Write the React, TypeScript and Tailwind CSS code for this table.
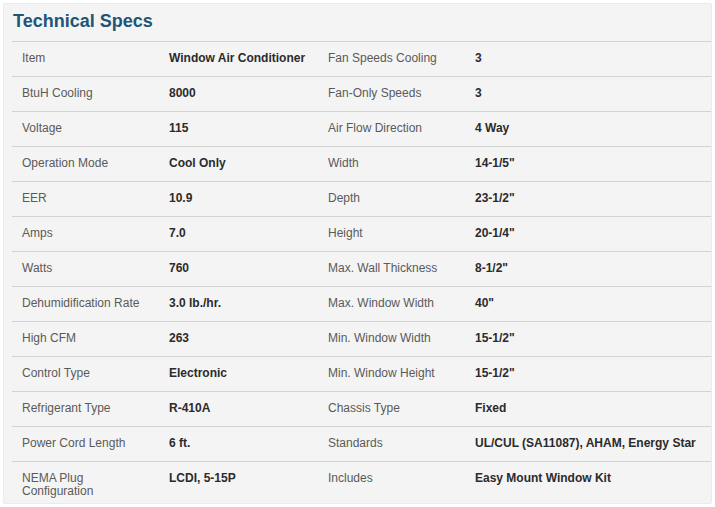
const specs: [string, string, string, string][] = [
    ['Item', 'Window Air Conditioner', 'Fan Speeds Cooling', '3'],
    ['BtuH Cooling', '8000', 'Fan-Only Speeds', '3'],
    ['Voltage', '115', 'Air Flow Direction', '4 Way'],
    ['Operation Mode', 'Cool Only', 'Width', '14-1/5"'],
    ['EER', '10.9', 'Depth', '23-1/2"'],
    ['Amps', '7.0', 'Height', '20-1/4"'],
    ['Watts', '760', 'Max. Wall Thickness', '8-1/2"'],
    ['Dehumidification Rate', '3.0 lb./hr.', 'Max. Window Width', '40"'],
    ['High CFM', '263', 'Min. Window Width', '15-1/2"'],
    ['Control Type', 'Electronic', 'Min. Window Height', '15-1/2"'],
    ['Refrigerant Type', 'R-410A', 'Chassis Type', 'Fixed'],
    ['Power Cord Length', '6 ft.', 'Standards', 'UL/CUL (SA11087), AHAM, Energy Star'],
];

export default function App() {
    return (
        <div className="bg-white p-[3px] font-['Liberation_Sans',Arial,sans-serif]">
            <div className="h-[501px] overflow-hidden rounded-[2px] border border-[#ebebeb] bg-[#f4f4f4] pl-[8px]">
                <h2 className="pt-[5px] pb-[8px] pl-[1px] text-[18px] leading-[24px] font-bold text-[#1d5677]">
                    Technical Specs
                </h2>

                {specs.map(([l1, v1, l2, v2]) => (
                    <div
                        key={l1}
                        className="grid h-[35px] grid-cols-[147px_159px_147px_1fr] border-t border-[#d3d3d3] pt-[9px] pl-[10px] text-[12px] leading-[14px]"
                    >
                        <span className="text-[#5a5a5a]">{l1}</span>
                        <span className="font-bold text-[#2b2b2b]">{v1}</span>
                        <span className="text-[#5a5a5a]">{l2}</span>
                        <span className="font-bold text-[#2b2b2b]">{v2}</span>
                    </div>
                ))}

                {/* Last row wraps onto two lines */}
                <div className="grid grid-cols-[147px_159px_147px_1fr] border-t border-[#d3d3d3] pt-[10px] pl-[10px] text-[12px] leading-[13px]">
                    <span className="text-[#5a5a5a]">
                        NEMA Plug
                        <br />
                        Configuration
                    </span>
                    <span className="font-bold text-[#2b2b2b]">LCDI, 5-15P</span>
                    <span className="text-[#5a5a5a]">Includes</span>
                    <span className="font-bold text-[#2b2b2b]">Easy Mount Window Kit</span>
                </div>
            </div>
        </div>
    );
}
